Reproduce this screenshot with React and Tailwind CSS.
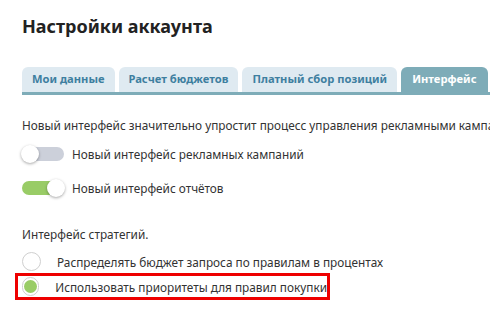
import React from "react";

function Toggle({ on }) {
  return (
    <div className={`relative w-[42px] h-[14px] rounded-full ${on ? "bg-[#99cc66]" : "bg-[#ccd0da]"}`}>
      <div
        className={`absolute top-[-2px] w-[18px] h-[18px] rounded-full bg-white shadow-[0_1px_3px_rgba(0,0,0,0.35)] ${on ? "right-[-1px]" : "left-[-1px]"}`}
      />
    </div>
  );
}

function Radio({ checked }) {
  return (
    <div className="w-[19px] h-[19px] rounded-full border border-[#cfcfcf] bg-white flex items-center justify-center">
      {checked && <div className="w-[13px] h-[13px] rounded-full bg-[#99cc66]" />}
    </div>
  );
}

export default function App() {
  const tabs = ["Мои данные", "Расчет бюджетов", "Платный сбор позиций"];
  return (
    <div
      className="w-[490px] h-[313px] overflow-hidden bg-white text-[#333] pl-[22px]"
      style={{ fontFamily: '"Noto Sans", "DejaVu Sans", sans-serif' }}
    >
      <h1 className="pt-[15px] text-[18px] leading-[22px] font-bold text-[#222]">Настройки аккаунта</h1>

      <div className="mt-[30px] flex items-end gap-[4px] border-b-[3px] border-[#7eacb8] w-[520px]">
        {tabs.map((t) => (
          <div
            key={t}
            className="h-[25px] px-[10px] rounded-t-[6px] bg-[#dfeaf1] text-[#3e7fa0] font-bold text-[11.2px] flex items-center whitespace-nowrap"
          >
            {t}
          </div>
        ))}
        <div className="h-[25px] px-[11px] rounded-t-[6px] bg-[#7eacb8] text-white font-bold text-[11.2px] flex items-center whitespace-nowrap">
          Интерфейс
        </div>
      </div>

      <p className="mt-[22px] text-[11.8px] leading-[16px] whitespace-nowrap">
        Новый интерфейс значительно упростит процесс управления рекламными кампаниями
      </p>

      <div className="mt-[13px] flex items-center gap-[8px] text-[11.8px] leading-[16px]">
        <Toggle on={false} />
        <span>Новый интерфейс рекламных кампаний</span>
      </div>
      <div className="mt-[18px] flex items-center gap-[8px] text-[11.8px] leading-[16px]">
        <Toggle on={true} />
        <span>Новый интерфейс отчётов</span>
      </div>

      <p className="mt-[30px] text-[11.8px] leading-[16px]">Интерфейс стратегий.</p>

      <div className="mt-[10px] flex items-center gap-[16px] text-[11.8px] leading-[16px] h-[19px]">
        <Radio checked={false} />
        <span className="whitespace-nowrap">Распределять бюджет запроса по правилам в процентах</span>
      </div>
      <div className="mt-[2px] ml-[-7px] w-[315px] h-[27px] border-[3px] border-[#ee0000] flex items-center pl-[4px] gap-[16px] text-[11.8px] leading-[16px]">
        <Radio checked={true} />
        <span className="whitespace-nowrap">Использовать приоритеты для правил покупки</span>
      </div>
    </div>
  );
}
